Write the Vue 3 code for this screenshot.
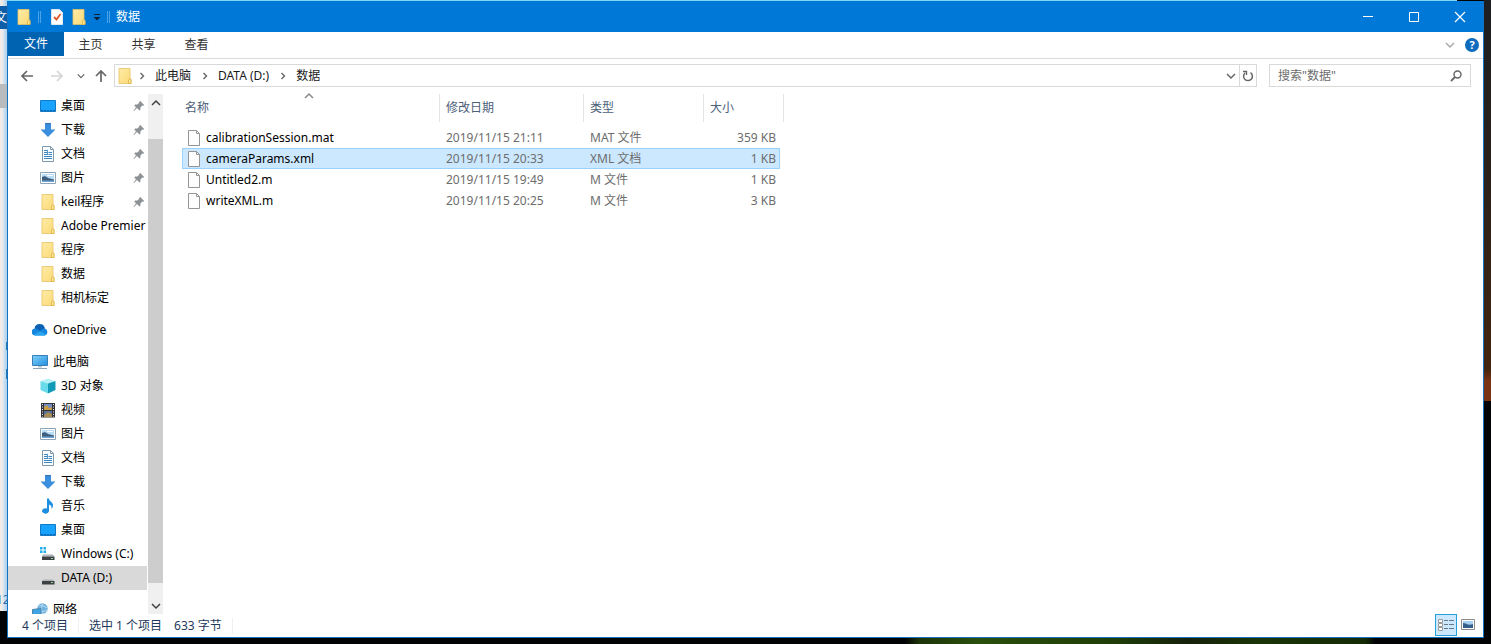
<script setup>
const pinned = [
  { icon: 'desktop', label: '桌面', pin: true },
  { icon: 'download', label: '下载', pin: true },
  { icon: 'document', label: '文档', pin: true },
  { icon: 'picture', label: '图片', pin: true },
  { icon: 'folder', label: 'keil程序', pin: true },
  { icon: 'folder', label: 'Adobe Premier' },
  { icon: 'folder', label: '程序' },
  { icon: 'folder', label: '数据' },
  { icon: 'folder', label: '相机标定' },
]
const cloud = [{ icon: 'onedrive', label: 'OneDrive', root: true }]
const computer = [
  { icon: 'pc', label: '此电脑', root: true },
  { icon: 'cube', label: '3D 对象' },
  { icon: 'video', label: '视频' },
  { icon: 'picture', label: '图片' },
  { icon: 'document', label: '文档' },
  { icon: 'download', label: '下载' },
  { icon: 'music', label: '音乐' },
  { icon: 'desktop', label: '桌面' },
  { icon: 'sysdrive', label: 'Windows (C:)' },
  { icon: 'drive', label: 'DATA (D:)', active: true },
]
const network = [{ icon: 'network', label: '网络', root: true }]
const groups = [pinned, cloud, computer, network]

const files = [
  { name: 'calibrationSession.mat', date: '2019/11/15 21:11', type: 'MAT 文件', size: '359 KB' },
  { name: 'cameraParams.xml', date: '2019/11/15 20:33', type: 'XML 文档', size: '1 KB', selected: true },
  { name: 'Untitled2.m', date: '2019/11/15 19:49', type: 'M 文件', size: '1 KB' },
  { name: 'writeXML.m', date: '2019/11/15 20:25', type: 'M 文件', size: '3 KB' },
]
const crumbs = ['此电脑', 'DATA (D:)', '数据']
</script>

<template>
  <div class="screen">
    <svg class="defs" aria-hidden="true">
      <defs>
        <linearGradient id="gFolder" x1="0" y1="0" x2="1" y2="1">
          <stop offset="0" stop-color="#ffeca8" /><stop offset="1" stop-color="#fbd974" />
        </linearGradient>
        <linearGradient id="gScreen" x1="0" y1="0" x2="1" y2="1">
          <stop offset="0" stop-color="#7fd0fb" /><stop offset="1" stop-color="#2490e0" />
        </linearGradient>
      </defs>
      <symbol id="folder" viewBox="0 0 16 16">
        <path d="M2 .5h11v10l1 1v4H2z" fill="url(#gFolder)" stroke="#e6c263" stroke-width=".8" />
        <path d="M11.500 15.500V12l1.500-1.500 1 1.500v3.500z" fill="#ffe89a" stroke="#dcae42" stroke-width=".8" />
      </symbol>
      <symbol id="desktop" viewBox="0 0 16 16">
        <path d="M.5 2.500h15v11H.5z" fill="#17a2fb" stroke="#1479c4" />
        <path d="M1 12.500h14" stroke="#0b66ae" stroke-dasharray="2 1" />
      </symbol>
      <symbol id="download" viewBox="0 0 16 16">
        <path d="M5 1h6v6.500h4.500L8 15 .5 7.500H5z" fill="#3b8edb" />
        <path d="M5 1h6v1H5z" fill="#2c73b8" />
      </symbol>
      <symbol id="document" viewBox="0 0 16 16">
        <path d="M2.500.5h8l3 3v12h-11z" fill="#fafdff" stroke="#7f98ad" />
        <path d="M10.500.5v3h3" fill="none" stroke="#7f98ad" />
        <path d="M4 4.500h4M4 6.500h3M4 8.500h3M4 10.500h8M4 12.500h8M8.500 6.500H12M8.500 8.500H12" stroke="#3d86c0" />
        <path d="M7.500 4v5" stroke="#4f96cc" />
      </symbol>
      <symbol id="picture" viewBox="0 0 16 16">
        <path d="M.5 2.500h15v11H.5z" fill="#fff" stroke="#8ca4b8" />
        <path d="M2 4h12v8H2z" fill="#b9dcf7" />
        <path d="M2 7c2-1 4-1 6 1l6 1.500V12H2z" fill="#3e5f7d" />
        <path d="M2 10.500h12V12H2z" fill="#6fa5d2" />
        <path d="M7 5.500h6" stroke="#fff" />
      </symbol>
      <symbol id="onedrive" viewBox="0 0 16 16">
        <path d="M3.500 13.500a3.500 3.500 0 0 1-.5-7 5.200 5.200 0 0 1 9.800 0 3.600 3.600 0 0 1-.3 7z" fill="#1686dc" />
        <path d="M2.500 6.600A5.200 5.200 0 0 1 12.800 6.500C10.500 6.500 9 8 8 9.300 6.500 7.500 5 6.600 2.500 6.600z" fill="#0b62b4" />
        <path d="m1.500 12.800 6.500-3.500 6.500 3.300-1.500.9H3z" fill="#29a3ee" />
      </symbol>
      <symbol id="pc" viewBox="0 0 16 16">
        <path d="M.5 1.500h15v10H.5z" fill="url(#gScreen)" stroke="#367eb3" />
        <path d="M6 12h4v1.500H6z" fill="#b7c7d3" /><path d="M1 14.500h14" stroke="#8ba5b8" />
      </symbol>
      <symbol id="cube" viewBox="0 0 16 16">
        <path d="m8 .5 7.500 2.500L8 5.500.5 3z" fill="#b6f0f7" />
        <path d="M.5 3 8 5.500v10L.5 12z" fill="#6adbea" />
        <path d="M15.500 3 8 5.500v10l7.500-3.500z" fill="#119ab8" />
      </symbol>
      <symbol id="video" viewBox="0 0 16 16">
        <path d="M1 1h14v14.500H1z" fill="#303238" />
        <path d="M4 2h8v6H4z" fill="#6f8fc4" /><path d="M4 9h8v6H4z" fill="#57719d" />
        <path d="m4 5 3-2 2 3 3-1v3H4z" fill="#c49d45" /><path d="m4 13 4-3 4 2v3H4z" fill="#a78b54" />
        <path d="M2.500 2v13M13.500 2v13" stroke="#eef1f5" stroke-dasharray="1 1.500" />
      </symbol>
      <symbol id="music" viewBox="0 0 16 16">
        <path d="M7 .5h2c0 3 4 3.500 4 7 0 1.500-.7 2.500-1.500 3.500C12 8 10.500 7 9 6.500V13a3.500 2.700 0 1 1-2-2.500z" fill="#1e8fe0" />
      </symbol>
      <symbol id="drive" viewBox="0 0 16 16">
        <path d="M3 9.500h10l1 2H2z" fill="#aeb3b7" /><path d="M2 11h12.500v3.500H2z" fill="#3c4043" />
        <path d="M11 12.500h2" stroke="#8ce0a0" />
      </symbol>
      <symbol id="sysdrive" viewBox="0 0 16 16">
        <path d="M0 1h2.500v2.500H0zM3.500 1H6v2.500H3.500zM0 4.500h2.500V7H0zM3.500 4.500H6V7H3.500z" fill="#22aee6" />
        <path d="M3 8.500h10l1 2H2z" fill="#aeb3b7" /><path d="M2 10.500h12.500V14H2z" fill="#3c4043" />
        <path d="M11 12.500h2" stroke="#8ce0a0" />
      </symbol>
      <symbol id="network" viewBox="0 0 16 16">
        <circle cx="10.500" cy="6.500" r="5.200" fill="#6fb2df" />
        <path d="M7 4c3-1 5 0 8 2M8 10c3-1 5-1 7-1M11 2c-2 3-2 6 0 10" stroke="#b8dcf3" fill="none" />
        <path d="M.5 7.500 9 6.500v6l-8.500 1z" fill="#3fa4e4" stroke="#4a84ad" />
        <path d="M2 15h7" stroke="#8ba5b8" />
      </symbol>
      <symbol id="pin" viewBox="0 0 12 12">
        <path d="m7 .8 4.200 4.200-1 .8-.8-.2-2 2 .1 2-1 1L4 8 .8 11.200l-.3-.5L3 7.300 1.200 5.500l1-1 2.200.1 2-2L6.200 2z" fill="#8d9296" />
      </symbol>
      <symbol id="file" viewBox="0 0 14 16">
        <path d="M1.500.5h8l3 3v12h-11z" fill="#fdfdfd" stroke="#959595" />
        <path d="M9.500.5v3h3" fill="none" stroke="#959595" />
      </symbol>
      <symbol id="chevDown" viewBox="0 0 10 10"><path d="m1 3 4 4 4-4" fill="none" stroke="currentColor" stroke-width="1.500" /></symbol>
      <symbol id="chevUp" viewBox="0 0 10 10"><path d="m1 7 4-4 4 4" fill="none" stroke="currentColor" stroke-width="1.500" /></symbol>
      <symbol id="chevRight" viewBox="0 0 10 10"><path d="m3.500 2 3 3-3 3" fill="none" stroke="currentColor" stroke-width="1.400" /></symbol>
      <symbol id="arrow" viewBox="0 0 14 14"><path d="M13 7H2M7 2 2 7l5 5" fill="none" stroke="currentColor" stroke-width="1.700" /></symbol>
    </svg>

    <div class="behind" aria-hidden="true">
      <span class="behind-tab">文</span>
      <span class="behind-bar"></span>
      <span class="behind-mark"></span>
      <span class="behind-mark low"></span>
      <span class="behind-count">12</span>
    </div>

    <main class="window">
      <header class="titlebar">
        <svg class="i16"><use href="#folder" /></svg>
        <span class="sep"></span>
        <button class="plain props" aria-label="属性">
          <svg class="i16" viewBox="0 0 16 16">
            <path d="M2.500.5h8l3 3v12h-11z" fill="#fff" stroke="#dfe6ee" />
            <path d="m5 8 2.500 2.500L11.500 5" fill="none" stroke="#e0582c" stroke-width="1.800" />
          </svg>
        </button>
        <button class="plain" aria-label="新建文件夹"><svg class="i16"><use href="#folder" /></svg></button>
        <button class="plain" aria-label="自定义快速访问工具栏">
          <svg class="i8" viewBox="0 0 8 8"><path d="M1 1.500h6" stroke="#06203c" /><path d="M.5 4h7L4 7.500z" fill="#06203c" /></svg>
        </button>
        <span class="sep"></span>
        <h1>数据</h1>
        <div class="controls">
          <button aria-label="最小化"><svg class="i12" viewBox="0 0 12 12"><path d="M1 5.500h10" stroke="#fff" /></svg></button>
          <button aria-label="最大化"><svg class="i12" viewBox="0 0 12 12"><path d="M1.500 1.500h9v9h-9z" fill="none" stroke="#fff" /></svg></button>
          <button aria-label="关闭"><svg class="i12" viewBox="0 0 12 12"><path d="m1 1 10 10M11 1 1 11" stroke="#fff" stroke-width="1.200" /></svg></button>
        </div>
      </header>

      <nav class="ribbon">
        <button class="tab file-tab">文件</button>
        <button class="tab">主页</button>
        <button class="tab">共享</button>
        <button class="tab">查看</button>
        <div class="ribbon-end">
          <button class="plain faint" aria-label="展开功能区"><svg class="i10"><use href="#chevDown" /></svg></button>
          <button class="plain help" aria-label="帮助">?</button>
        </div>
      </nav>

      <div class="addressbar">
        <button class="plain nav" aria-label="返回"><svg class="i14"><use href="#arrow" /></svg></button>
        <button class="plain nav off" aria-label="前进"><svg class="i14 flip"><use href="#arrow" /></svg></button>
        <button class="plain nav recent" aria-label="最近位置"><svg class="i8"><use href="#chevDown" /></svg></button>
        <button class="plain nav up" aria-label="上移"><svg class="i14 quarter"><use href="#arrow" /></svg></button>
        <div class="path">
          <svg class="i16"><use href="#folder" /></svg>
          <template v-for="c in crumbs" :key="c">
            <svg class="i10 crumb-arrow"><use href="#chevRight" /></svg>
            <button class="plain crumb">{{ c }}</button>
          </template>
          <button class="plain drop" aria-label="历史记录"><svg class="i10"><use href="#chevDown" /></svg></button>
          <button class="plain refresh" aria-label="刷新">
            <svg class="i12" viewBox="0 0 12 12">
              <path d="M8.500 2.600A4.400 4.400 0 1 1 3 3" fill="none" stroke="#666" stroke-width="1.500" />
              <path d="M1 1.500h3.500V5" fill="none" stroke="#666" stroke-width="1.400" />
            </svg>
          </button>
        </div>
        <div class="search">
          <input type="text" aria-label="搜索" placeholder="搜索&quot;数据&quot;" />
          <svg class="i12" viewBox="0 0 12 12">
            <circle cx="7.500" cy="4.500" r="3.500" fill="none" stroke="#666" stroke-width="1.400" />
            <path d="M5 7 1 11" stroke="#666" stroke-width="1.800" />
          </svg>
        </div>
      </div>

      <div class="body">
        <aside class="tree">
          <ul v-for="(g, gi) in groups" :key="gi">
            <li v-for="item in g" :key="item.label">
              <a href="#" :class="{ root: item.root, active: item.active }">
                <svg class="i16"><use :href="'#' + item.icon" /></svg>
                <span class="label">{{ item.label }}</span>
                <svg v-if="item.pin" class="i12 pin"><use href="#pin" /></svg>
              </a>
            </li>
          </ul>
        </aside>
        <div class="scroll" aria-hidden="true">
          <svg class="i10"><use href="#chevUp" /></svg>
          <span class="thumb"></span>
          <svg class="i10"><use href="#chevDown" /></svg>
        </div>
        <section class="content">
          <table>
            <thead>
              <tr>
                <th class="c-name">名称<svg class="i10 sort"><use href="#chevUp" /></svg></th>
                <th class="c-date">修改日期</th>
                <th class="c-type">类型</th>
                <th class="c-size">大小</th>
                <td class="c-end"></td>
              </tr>
            </thead>
            <tbody>
              <tr v-for="f in files" :key="f.name" :class="{ selected: f.selected }">
                <td class="name"><span><svg class="fi"><use href="#file" /></svg>{{ f.name }}</span></td>
                <td>{{ f.date }}</td>
                <td>{{ f.type }}</td>
                <td class="size">{{ f.size }}</td>
              </tr>
            </tbody>
          </table>
        </section>
      </div>

      <footer class="status">
        <span class="total">4 个项目</span>
        <span class="picked">选中 1 个项目</span>
        <span class="bytes">633 字节</span>
        <div class="views">
          <button class="plain view on" aria-label="详细信息">
            <svg class="i16" viewBox="0 0 16 16">
              <path d="M.5 2.500h4v3h-4zM.5 6.500h4v3h-4zM.5 10.500h4v3h-4z" fill="#fff" stroke="#9a9a9a" />
              <path d="M6 3.500h4M11 3.500h5M6 7.500h4M11 7.500h5M6 11.500h4M11 11.500h5" stroke="#6a7782" />
            </svg>
          </button>
          <button class="plain view" aria-label="大图标">
            <svg class="i14" viewBox="0 0 14 14">
              <path d="M.5 1.500h13v10H.5z" fill="#fff" stroke="#8b8b8b" />
              <path d="M2 3h10v7H2z" fill="#a5cef0" /><path d="M2 5c3 0 5 3 10 1v4H2z" fill="#365f8c" />
            </svg>
          </button>
        </div>
      </footer>
    </main>
  </div>
</template>

<style>
body { margin: 0; }
</style>

<style scoped>
* { box-sizing: border-box; }
.screen {
  position: relative;
  display: flex;
  height: 100vh;
  padding: 1px 7px 6px 7px;
  overflow: hidden;
  font: 12px/16px "Noto Sans", "Noto Sans CJK SC", sans-serif;
  color: #1a1a1a;
  background:
    linear-gradient(90deg, transparent, #1d3308 3%, #2a4f0c 15%, #1f3d08 45%, #16210a 60%, #1b3407 75%, #142a06 98%, transparent) 905px 100% / 470px 6px no-repeat,
    linear-gradient(#7fd6f5, #7fd6f5) 0 0 / calc(100% - 34px) 1px no-repeat,
    linear-gradient(#1d1f22, #2b211a 45%, #43250f 92%, #7a3414 95%, #7a3414) 100% 0 / 7px 401px no-repeat,
    #020305;
}
.defs { position: absolute; width: 0; height: 0; }
.behind {
  position: absolute;
  top: 0;
  left: 0;
  width: 7px;
  height: 611px;
  overflow: hidden;
  background: linear-gradient(90deg, #f3ebe6 2px, #cfe3f3 4px, #a9cdea 7px);
}
.behind span { position: absolute; left: 0; width: 7px; }
.behind .behind-tab { top: 6px; height: 23px; line-height: 23px; background: #0c5fa8; color: #fff; text-indent: -5px; }
.behind .behind-bar { top: 84px; height: 24px; background: #b9bcbf; }
.behind .behind-mark { top: 342px; left: 6px; width: 1px; height: 8px; background: #2779b5; }
.behind .behind-mark.low { top: 369px; height: 10px; }
.behind .behind-count { bottom: 3px; color: #2d6dab; text-indent: -4px; }
.window {
  position: relative;
  display: flex;
  flex: 1;
  flex-direction: column;
  min-width: 0;
  border: 1px solid #1572c0;
  border-top: 0;
  background: #fff;
}
svg { display: block; flex: none; }
.i16 { width: 16px; height: 16px; }
.i14 { width: 14px; height: 14px; }
.i12 { width: 12px; height: 12px; }
.i10 { width: 10px; height: 10px; }
.i8 { width: 8px; height: 8px; }
button { font: inherit; color: inherit; border: 0; background: none; padding: 0; }
.plain { display: flex; align-items: center; justify-content: center; }

.titlebar { display: flex; align-items: center; gap: 6px; height: 31px; flex: none; padding-left: 8px; background: #0078d7; color: #fff; }
.sep { width: 3px; height: 12px; border: solid #4da3e6; border-width: 0 1px; }
.props { margin-left: 2px; }
h1 { margin: 0; font-size: 12px; font-weight: 400; }
.controls { display: flex; margin-left: auto; align-self: stretch; }
.controls button { display: flex; align-items: center; justify-content: center; width: 46px; }

.ribbon { display: flex; height: 27px; flex: none; border-bottom: 1px solid #dadbdc; }
.tab { width: 53px; height: 25px; color: #333; }
.file-tab { width: 56px; height: 24px; background: #0063b1; color: #fff; }
.ribbon-end { display: flex; align-items: center; gap: 10px; margin-left: auto; padding-right: 4px; }
.faint { color: #aaa; }
.help { width: 14px; height: 14px; border-radius: 50%; background: #0f6cbd; color: #fff; font-weight: 700; font-size: 11px; }

.addressbar { display: flex; align-items: center; height: 35px; flex: none; padding: 0 12px 2px; color: #666; }
.nav { width: 14px; height: 22px; }
.nav.off { margin-left: 16px; color: #d5d5d5; }
.nav.recent { margin-left: 10px; }
.nav.up { margin-left: 6px; }
.flip { transform: rotate(180deg); }
.quarter { transform: rotate(90deg); }
.path { display: flex; align-items: center; flex: 1; height: 23px; margin: 0 12px 0 6px; padding-left: 2px; border: 1px solid #d9d9d9; }
.crumb { color: #1a1a1a; margin: 0 9px 0 8px; }
.path .i16 + .crumb-arrow { margin-left: 4px; }
.drop { margin-left: auto; margin-right: 3px; }
.refresh { width: 17px; height: 21px; border-left: 1px solid #d9d9d9; }
.search { display: flex; align-items: center; width: 202px; height: 23px; padding: 0 8px; border: 1px solid #d9d9d9; }
.search input { flex: 1; min-width: 0; border: 0; padding: 0; font: inherit; outline: 0; background: none; }
.search input::placeholder { color: #6d6d6d; opacity: 1; }

.body { display: flex; flex: 1; min-height: 0; }
.tree { width: 139px; overflow: hidden; }
ul { list-style: none; margin: 0 0 8px; padding: 0; }
.tree a { display: flex; align-items: center; gap: 5px; height: 24px; padding: 0 2px 0 32px; color: #000; text-decoration: none; }
.tree a.root { padding-left: 24px; }
.tree a.active { background: #d9d9d9; }
.label { white-space: nowrap; }
.pin { margin-left: auto; }
.scroll { display: flex; flex-direction: column; align-items: center; width: 15px; padding: 4px 0 3px; margin-left: 1px; background: #f0f0f0; color: #404040; }
.thumb { align-self: stretch; flex: 1; margin: 31px 0 18px; background: #cdcdcd; }
.content { flex: 1; padding: 0 0 0 19px; }
table { border-collapse: separate; border-spacing: 0; table-layout: fixed; width: 602px; }
th { position: relative; height: 28px; padding: 0 0 0 6px; font-weight: 400; text-align: left; color: #4c607a; border-left: 1px solid #e5e5e5; }
.c-name { width: 257px; padding-left: 3px; border-left: 0; }
.c-date { width: 144px; }
.c-type { width: 120px; }
.c-size { width: 77px; }
thead .c-end { width: 4px; padding: 0; border-right: 1px solid #e5e5e5; }
.sort { position: absolute; top: -3px; left: 122px; color: #888; }
thead::after { content: ""; display: block; height: 5px; }
td { height: 21px; padding: 0 0 0 7px; color: #6d6d6d; white-space: nowrap; }
td.name { padding-left: 5px; color: #000; }
td.name span { display: flex; align-items: center; gap: 5px; }
.fi { width: 14px; height: 16px; }
td.size { padding: 0 4px 0 0; text-align: right; }
tr.selected td { background: #cce8ff; box-shadow: inset 0 1px #99d1ff, inset 0 -1px #99d1ff; }
tr.selected td:first-child { box-shadow: inset 0 1px #99d1ff, inset 0 -1px #99d1ff, inset 1px 0 #99d1ff; }
tr.selected td:last-child { box-shadow: inset 0 1px #99d1ff, inset 0 -1px #99d1ff, inset -1px 0 #99d1ff; }

.status { display: flex; align-items: center; height: 23px; flex: none; padding-left: 14px; color: #1e395b; }
.total { padding-right: 10px; border-right: 1px solid #f0f0f0; }
.picked { padding-left: 10px; }
.bytes { padding: 0 10px 0 12px; border-right: 1px solid #f0f0f0; }
.views { display: flex; align-self: stretch; margin-left: auto; padding-right: 4px; }
.view { width: 22px; height: 22px; }
.view.on { background: #cce8ff; border: 1px solid #26a0da; }
</style>
